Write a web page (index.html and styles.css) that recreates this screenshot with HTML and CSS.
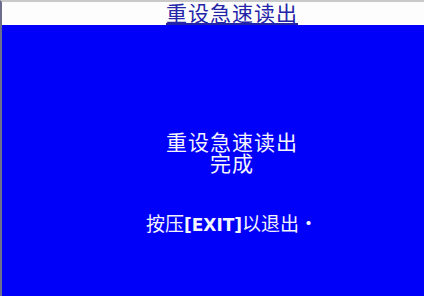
FILE: index.html
```html
<!DOCTYPE html>
<html lang="zh-CN">
<head>
    <meta charset="UTF-8">
    <meta name="viewport" content="width=device-width, initial-scale=1.0">
    <title>重设急速读出</title>
    <link rel="stylesheet" href="styles.css">
</head>
<body>

<div class="screen">
    <div class="title-bar">
        <span class="title">重设急速读出</span>
    </div>
    <div class="panel">
        <div class="message">
            <div>重设急速读出</div>
            <div>完成</div>
        </div>
        <div class="hint">按压<span class="key">[EXIT]</span>以退出•</div>
    </div>
</div>

</body>
</html>
```

FILE: styles.css
```css
body {
    margin: 0;
    font-family: "Noto Sans CJK SC", "DejaVu Sans", sans-serif;
    background: #0000fa;
}

.screen {
    width: 424px;
    height: 296px;
    box-sizing: border-box;
    border-top: 2px solid #c9c9c9;
    border-left: 2px solid #6c6c8c;
    display: flex;
    flex-direction: column;
}

.title-bar {
    height: 23px;
    background: #fdfdfd;
    padding-left: 38px;
    text-align: center;
}

.title {
    display: inline-block;
    color: #2424a8;
    font-size: 21px;
    line-height: 21px;
    letter-spacing: 1px;
    border-bottom: 2px solid #2424a8;
}

.panel {
    flex: 1;
    background: #0000fa;
    color: #f4f4ff;
    padding-left: 38px;
    text-align: center;
}

.message {
    font-size: 21px;
    line-height: 21px;
    letter-spacing: 1px;
    margin-top: 106px;
}

.hint {
    font-size: 19px;
    line-height: 22px;
    margin-top: 39px;
}

.key {
    font-family: "DejaVu Sans", sans-serif;
    font-weight: bold;
    font-size: 17px;
}
```
